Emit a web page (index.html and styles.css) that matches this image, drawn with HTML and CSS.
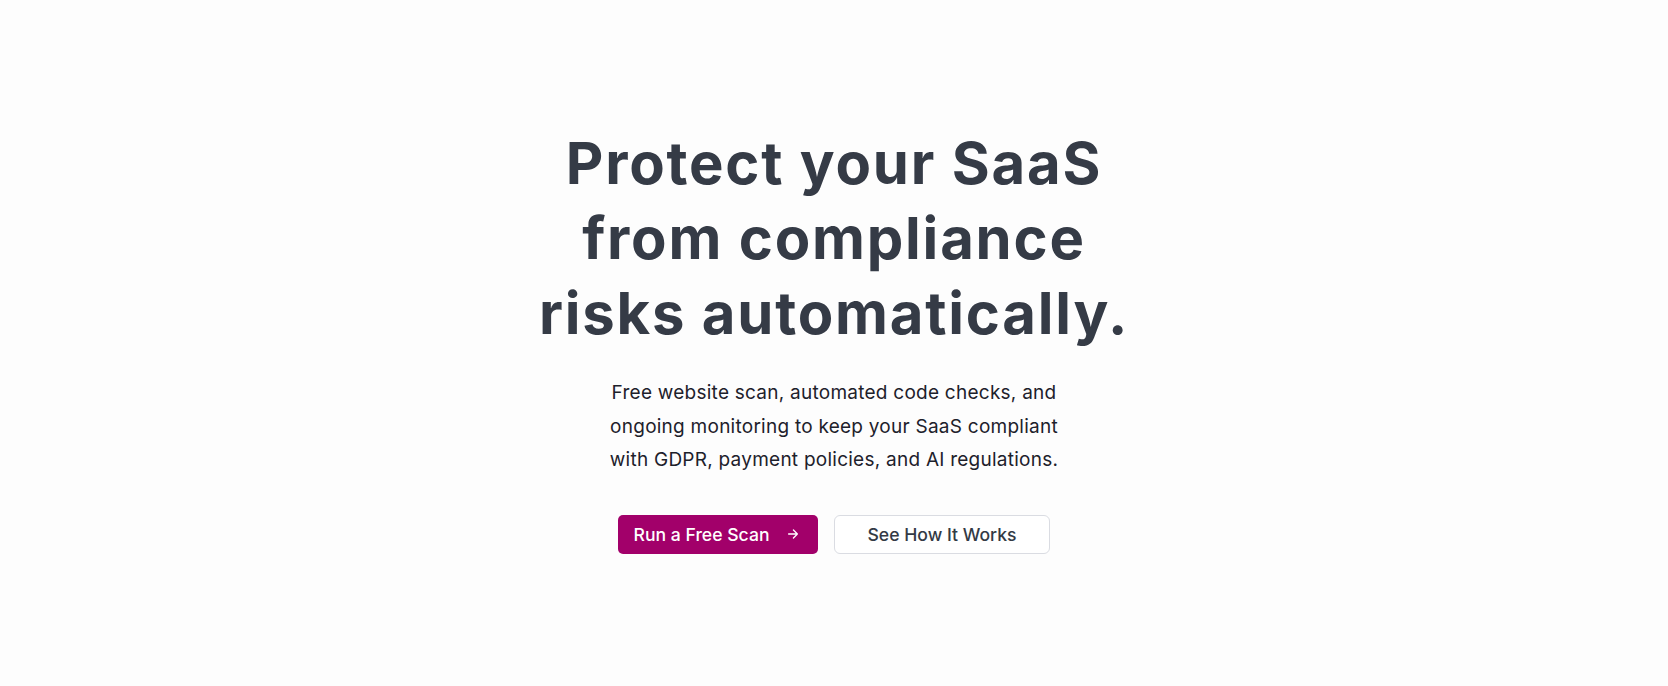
FILE: index.html
```html
<!DOCTYPE html>
<html lang="en">
<head>
<meta charset="utf-8">
<title>Protect your SaaS</title>
<link rel="stylesheet" href="styles.css">
</head>
<body>
<main class="hero">
  <h1 class="hero-title">Protect your SaaS<br>from compliance<br>risks automatically.</h1>
  <p class="hero-text">Free website scan, automated code checks, and ongoing monitoring to keep your SaaS compliant with GDPR, payment policies, and AI regulations.</p>
  <div class="hero-actions">
    <a class="btn btn-primary" href="#">Run a Free Scan
      <svg class="btn-arrow" viewBox="0 0 16 16" width="14" height="14" fill="none" stroke="currentColor" stroke-width="1.5" stroke-linecap="round" stroke-linejoin="round"><path d="M3 8h10M8.5 3.5 13 8l-4.5 4.5"/></svg>
    </a>
    <a class="btn btn-secondary" href="#">See How It Works</a>
  </div>
</main>
</body>
</html>
```
FILE: styles.css
```css
* { box-sizing: border-box; }
html, body { margin: 0; padding: 0; }
body {
  background: #fdfdfd;
  font-family: Inter, "Liberation Sans", sans-serif;
  color: #1f2430;
}
.hero {
  min-height: 100vh;
  display: flex;
  flex-direction: column;
  align-items: center;
  justify-content: center;
  text-align: center;
  padding-bottom: 6px;
}
.hero-title {
  margin: 0;
  font-family: Inter, "Liberation Sans", sans-serif;
  font-weight: 700;
  font-size: 58px;
  line-height: 75px;
  letter-spacing: 1.8px;
  color: #353b46;
}
.hero-text {
  margin: 25px 0 0;
  max-width: 470px;
  font-size: 19px;
  line-height: 33.5px;
  letter-spacing: 0.25px;
  color: #1d212b;
}
.hero-actions {
  margin-top: 38px;
  display: flex;
  gap: 16px;
}
.btn {
  display: inline-flex;
  align-items: center;
  justify-content: center;
  height: 39px;
  font-size: 17.6px;
  font-weight: 500;
  text-decoration: none;
  border-radius: 5px;
}
.btn-primary {
  background: #a2006a;
  color: #ffffff;
  padding: 0 18px 0 16px;
  gap: 16px;
}
.btn-arrow { display: block; }
.btn-secondary {
  background: #ffffff;
  color: #333a45;
  border: 1px solid #dadce2;
  border-radius: 6px;
  padding: 0 33px;
}
```
